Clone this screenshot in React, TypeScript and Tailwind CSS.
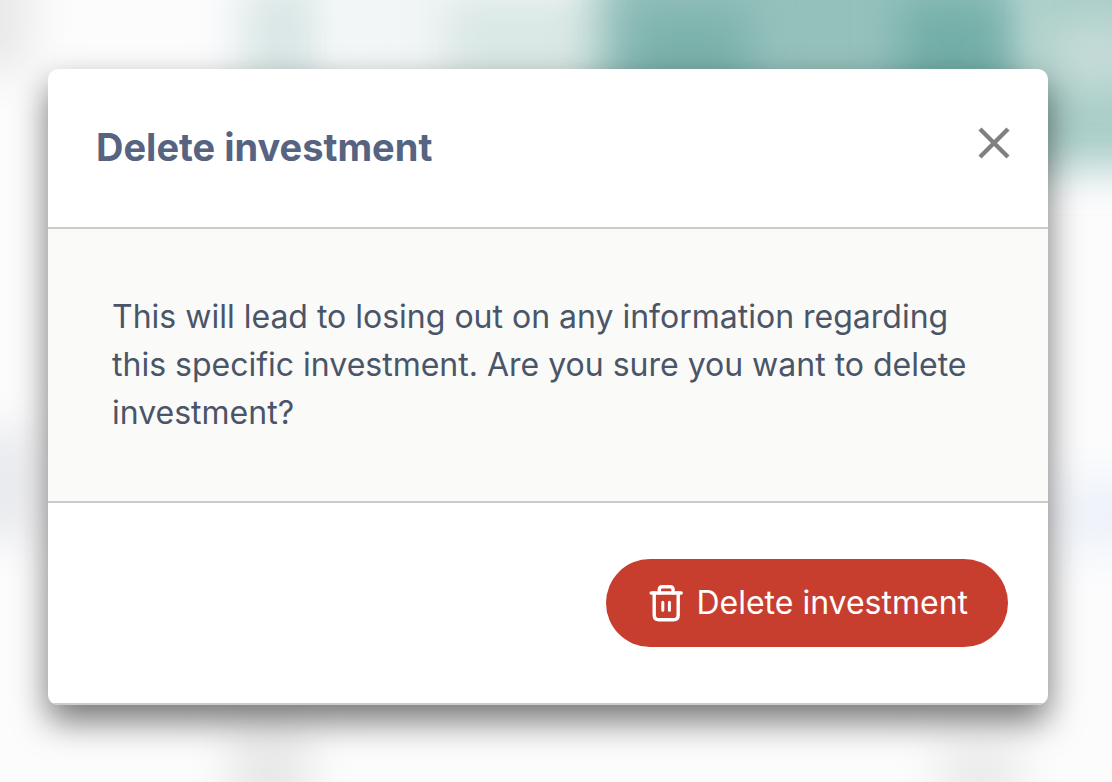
import { useState } from "react";

const blobs = [
  { x: -70, y: -60, w: 100, h: 130, fill: "#e8e8e8" },
  { x: 240, y: -20, w: 90, h: 130, fill: "#dae7e6" },
  { x: 330, y: -60, w: 120, h: 170, fill: "#f3f6f7" },
  { x: 440, y: -10, w: 190, h: 130, fill: "#dae8e5" },
  { x: 597, y: -90, w: 435, h: 255, fill: "#95c1bc" },
  { x: 1015, y: -90, w: 200, h: 258, fill: "#a8cdc8" },
  { x: 630, y: 10, w: 120, h: 130, fill: "#7ab1ab" },
  { x: 900, y: 0, w: 105, h: 150, fill: "#72aea7" },
  { x: 1050, y: 20, w: 90, h: 70, fill: "#c6dcd7" },
  { x: -60, y: 430, w: 90, h: 110, fill: "#e8e9ed" },
  { x: 1060, y: 480, w: 100, h: 70, fill: "#edf2f9" },
  { x: 230, y: 730, w: 80, h: 90, fill: "#e8e8e8" },
  { x: 940, y: 740, w: 80, h: 90, fill: "#ebebeb" },
];

function BlurredPage() {
  return (
    <svg
      viewBox="0 0 1112 782"
      preserveAspectRatio="none"
      aria-hidden="true"
      className="absolute inset-0 size-full"
    >
      <filter id="soften" x="-100%" y="-100%" width="300%" height="300%">
        <feGaussianBlur stdDeviation="22" />
      </filter>
      <rect width="1112" height="782" fill="#fcfcfd" />
      {blobs.map((blob) => (
        <rect
          key={`${blob.x}-${blob.y}`}
          x={blob.x}
          y={blob.y}
          width={blob.w}
          height={blob.h}
          fill={blob.fill}
          filter="url(#soften)"
        />
      ))}
    </svg>
  );
}

function CloseIcon() {
  return (
    <svg viewBox="0 0 32 32" fill="none" aria-hidden="true" className="size-8">
      <path d="M2 2L30 30M30 2L2 30" stroke="#808080" strokeWidth="4.4" />
    </svg>
  );
}

function TrashIcon() {
  return (
    <svg
      viewBox="0 0 40 40"
      fill="none"
      stroke="currentColor"
      strokeWidth="3.4"
      strokeLinecap="round"
      strokeLinejoin="round"
      aria-hidden="true"
      className="size-10 shrink-0"
    >
      <path d="M5.2 10H35.2" />
      <path d="M8.2 10V32Q8.2 36.8 13 36.8H27.4Q32.2 36.8 32.2 32V10" />
      <path d="M13.3 10V6.7Q13.3 3.7 16.3 3.7H24.1Q27.1 3.7 27.1 6.7V10" />
      <path d="M16.8 19.3V27.2M23.4 19.3V27.2" strokeWidth="3" />
    </svg>
  );
}

export default function App() {
  const [isOpen, setIsOpen] = useState(true);

  return (
    <main className="relative min-h-screen pt-[69px] pr-16 pb-[77px] pl-12 font-['Inter',sans-serif]">
      <BlurredPage />
      {isOpen && (
        <div
          role="dialog"
          aria-modal="true"
          aria-labelledby="delete-title"
          aria-describedby="delete-text"
          className="relative mx-auto w-full max-w-[1000px] overflow-hidden rounded-[10px] bg-white shadow-[0_16px_34px_rgba(0,0,0,0.54)]"
        >
          <header className="flex items-start justify-between border-b-2 border-[#cccccc] pt-12 pr-[38px] pb-[50px] pl-12">
            <h1 id="delete-title" className="text-[38px] leading-[60px] font-bold text-[#566381]">
              Delete investment
            </h1>
            <button
              type="button"
              aria-label="Close"
              onClick={() => setIsOpen(false)}
              className="mt-2.5 cursor-pointer"
            >
              <CloseIcon />
            </button>
          </header>
          <p
            id="delete-text"
            className="border-b-2 border-[#cccccc] bg-[#fafaf8] p-16 text-[32px] leading-[48px] text-[#4a5568]"
          >
            This will lead to losing out on any information regarding this specific investment. Are
            you sure you want to delete investment?
          </p>
          <footer className="flex justify-end border-b-2 border-[#cccccc] px-10 py-14">
            <button
              type="button"
              onClick={() => setIsOpen(false)}
              className="flex cursor-pointer items-center gap-2.5 rounded-full bg-[#c73e2f] px-10 py-5 text-[32px] leading-[48px] text-white"
            >
              <TrashIcon />
              Delete investment
            </button>
          </footer>
        </div>
      )}
    </main>
  );
}
